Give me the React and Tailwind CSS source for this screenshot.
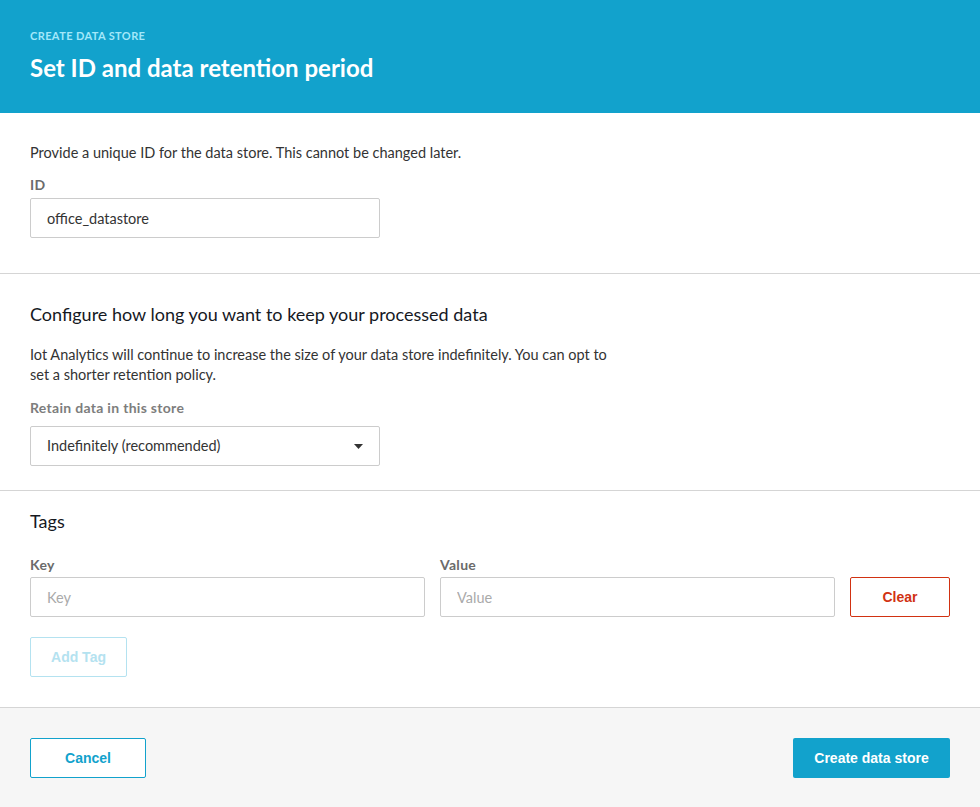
import { useState } from 'react'

const ember = { fontFamily: 'Lato, "Open Sans", sans-serif' }
const arial = { fontFamily: '"Liberation Sans", Arial, sans-serif' }

export default function App() {
  const [id, setId] = useState('office_datastore')

  return (
    <div className="w-[980px] h-[807px] bg-white flex flex-col text-[#16191f]" style={ember}>
      {/* Header */}
      <div className="h-[113px] shrink-0 bg-[#12a2cc] px-[30px] pt-[29px]">
        <p className="text-[11px] tracking-[0.4px] font-bold uppercase text-[#a3e8fa] leading-[14px]">Create data store</p>
        <h1 className="mt-[10px] text-[24px] font-bold text-white leading-[30px]">Set ID and data retention period</h1>
      </div>

      {/* ID */}
      <div className="shrink-0 px-[30px] pt-[30px] pb-[35px] border-b border-[#d5d5d5]">
        <p className="text-[14.5px] leading-[20px] text-[#333]">Provide a unique ID for the data store. This cannot be changed later.</p>
        <label className="block mt-[14px] text-[14px] tracking-[0.3px] font-bold text-[#6b6b6b] leading-[16px]">ID</label>
        <input
          value={id}
          onChange={(e) => setId(e.target.value)}
          className="mt-[5px] w-[350px] h-[40px] border border-[#cccccc] rounded-[2px] px-[16px] text-[14.5px] text-[#333] outline-none"
        />
      </div>

      {/* Retention */}
      <div className="shrink-0 px-[30px] pt-[28px] pb-[24px] border-b border-[#d5d5d5]">
        <h2 className="text-[18px] leading-[24px] text-[#16191f]">Configure how long you want to keep your processed data</h2>
        <p className="mt-[19px] w-[590px] text-[14.5px] leading-[20px] text-[#333]">
          Iot Analytics will continue to increase the size of your data store indefinitely. You can opt to set a shorter retention policy.
        </p>
        <label className="block mt-[15px] text-[14px] tracking-[0.3px] font-bold text-[#7d7d7d] leading-[16px]">Retain data in this store</label>
        <div className="mt-[10px] w-[350px] h-[40px] border border-[#cccccc] rounded-[2px] pl-[16px] pr-[16px] flex items-center justify-between text-[14.5px] text-[#333]">
          <span>Indefinitely (recommended)</span>
          <svg width="9" height="5" viewBox="0 0 9 5">
            <path d="M0 0h9L4.5 5z" fill="#333" />
          </svg>
        </div>
      </div>

      {/* Tags */}
      <div className="shrink-0 px-[30px] pt-[19px] pb-[30px] border-b border-[#d5d5d5]">
        <h2 className="text-[18px] leading-[22px] text-[#16191f]">Tags</h2>
        <div className="mt-[25px] flex items-end gap-[15px]">
          <div className="w-[395px]">
            <label className="block text-[14px] tracking-[0.3px] font-bold text-[#6b6b6b] leading-[16px]">Key</label>
            <input
              placeholder="Key"
              className="mt-[4px] w-full h-[40px] border border-[#cccccc] rounded-[2px] px-[16px] text-[14.5px] outline-none placeholder:text-[#aaa]"
            />
          </div>
          <div className="w-[395px]">
            <label className="block text-[14px] tracking-[0.3px] font-bold text-[#6b6b6b] leading-[16px]">Value</label>
            <input
              placeholder="Value"
              className="mt-[4px] w-full h-[40px] border border-[#cccccc] rounded-[2px] px-[16px] text-[14.5px] outline-none placeholder:text-[#aaa]"
            />
          </div>
          <button
            className="w-[100px] h-[40px] border border-[#d13212] rounded-[2px] text-[14px] font-bold text-[#d13212] bg-white"
            style={arial}
          >
            Clear
          </button>
        </div>
        <button
          className="mt-[20px] w-[97px] h-[40px] border border-[#b4e2f0] rounded-[2px] text-[14px] font-bold text-[#b4e2f0] bg-white"
          style={arial}
        >
          Add Tag
        </button>
      </div>

      {/* Footer */}
      <div className="flex-1 bg-[#f6f6f6] px-[30px] pt-[30px] flex justify-between items-start">
        <button
          className="w-[116px] h-[40px] border border-[#12a2cc] rounded-[2px] text-[14px] font-bold text-[#12a2cc] bg-white"
          style={arial}
        >
          Cancel
        </button>
        <button
          className="w-[157px] h-[40px] rounded-[2px] text-[14px] font-bold text-white bg-[#12a2cc]"
          style={arial}
        >
          Create data store
        </button>
      </div>
    </div>
  )
}
